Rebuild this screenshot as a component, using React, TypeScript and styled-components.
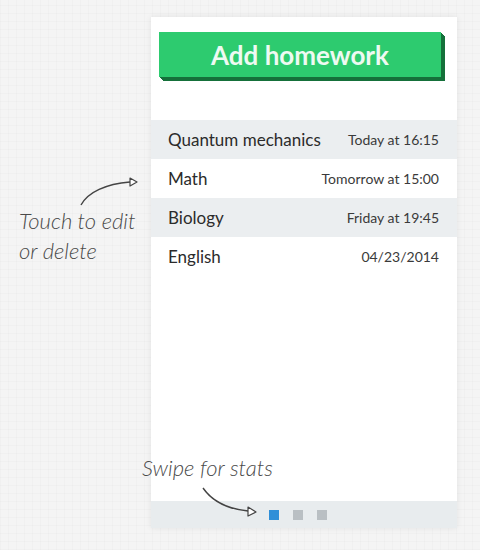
import styled, { createGlobalStyle } from "styled-components";

const GlobalStyle = createGlobalStyle`
  html, body {
    margin: 0;
    padding: 0;
  }
  body {
    font-family: Lato, "Open Sans", sans-serif;
    background-color: #f4f4f4;
    background-image:
      repeating-linear-gradient(0deg, rgba(0,0,0,0.015) 0 1px, transparent 1px 8px),
      repeating-linear-gradient(90deg, rgba(0,0,0,0.015) 0 1px, transparent 1px 8px);
  }
`;

const Page = styled.div`
  position: relative;
  width: 480px;
  height: 550px;
  padding: 17px 0 0 151px;
  box-sizing: border-box;
`;

const Card = styled.div`
  width: 306px;
  height: 511px;
  background: #ffffff;
  box-shadow: 0 0 6px rgba(0, 0, 0, 0.08);
  display: flex;
  flex-direction: column;
`;

const AddButton = styled.button`
  margin: 15px 16px 0 8px;
  height: 45px;
  border: 0;
  background: #2dcb6f;
  color: #eefaf2;
  font-family: Lato, sans-serif;
  font-weight: 700;
  font-size: 26px;
  box-shadow: 1px 1px 0 #15703a, 2px 2px 0 #15703a, 3px 3px 0 #15703a, 4px 4px 0 #15703a;
  cursor: pointer;
`;

const List = styled.ul`
  list-style: none;
  margin: 43px 0 0;
  padding: 0;
`;

const Row = styled.li<{ $shaded: boolean }>`
  height: 39px;
  display: flex;
  align-items: center;
  justify-content: space-between;
  padding: 0 18px 0 17px;
  background: ${(p) => (p.$shaded ? "#ebeef0" : "#ffffff")};
`;

const Subject = styled.span`
  font-size: 17px;
  color: #2b2b2b;
`;

const When = styled.span`
  font-size: 14px;
  color: #3a3a3a;
`;

const Spacer = styled.div`
  flex: 1;
`;

const Footer = styled.div`
  height: 27px;
  background: #e8ecee;
  display: flex;
  align-items: center;
  gap: 14px;
  padding-left: 118px;
`;

const Dot = styled.span<{ $active: boolean }>`
  width: 10px;
  height: 10px;
  background: ${(p) => (p.$active ? "#2f8fd8" : "#b9bfc3")};
`;

const Callout = styled.div<{ $top: number; $left: number }>`
  position: absolute;
  top: ${(p) => p.$top}px;
  left: ${(p) => p.$left}px;
  font-family: Lato, sans-serif;
  font-style: italic;
  font-weight: 300;
  font-size: 22px;
  line-height: 30px;
  color: #4a4a4a;
  white-space: nowrap;
`;

const Arrow = styled.svg`
  position: absolute;
  overflow: visible;
`;

const items = [
  { subject: "Quantum mechanics", when: "Today at 16:15" },
  { subject: "Math", when: "Tomorrow at 15:00" },
  { subject: "Biology", when: "Friday at 19:45" },
  { subject: "English", when: "04/23/2014" },
];

export default function App() {
  return (
    <>
      <GlobalStyle />
      <Page>
        <Card>
          <AddButton>Add homework</AddButton>
          <List>
            {items.map((it, i) => (
              <Row key={it.subject} $shaded={i % 2 === 0}>
                <Subject>{it.subject}</Subject>
                <When>{it.when}</When>
              </Row>
            ))}
          </List>
          <Spacer />
          <Footer>
            <Dot $active />
            <Dot $active={false} />
            <Dot $active={false} />
          </Footer>
        </Card>

        <Callout $top={206} $left={19}>
          Touch to edit
          <br />
          or delete
        </Callout>
        <Arrow style={{ left: 78, top: 176 }} width="62" height="32" viewBox="0 0 62 32">
          <path d="M3 29 C10 16 28 8 52 6" fill="none" stroke="#444" strokeWidth="1.4" />
          <path d="M52 2 L59 6 L52 10 Z" fill="#fff" stroke="#444" strokeWidth="1.2" strokeLinejoin="round" />
        </Arrow>

        <Callout $top={453} $left={142}>Swipe for stats</Callout>
        <Arrow style={{ left: 200, top: 485 }} width="62" height="32" viewBox="0 0 62 32">
          <path d="M3 3 C12 16 28 24 48 26" fill="none" stroke="#444" strokeWidth="1.4" />
          <path d="M48 22 L56 27 L48 31 Z" fill="#fff" stroke="#444" strokeWidth="1.2" strokeLinejoin="round" />
        </Arrow>
      </Page>
    </>
  );
}
